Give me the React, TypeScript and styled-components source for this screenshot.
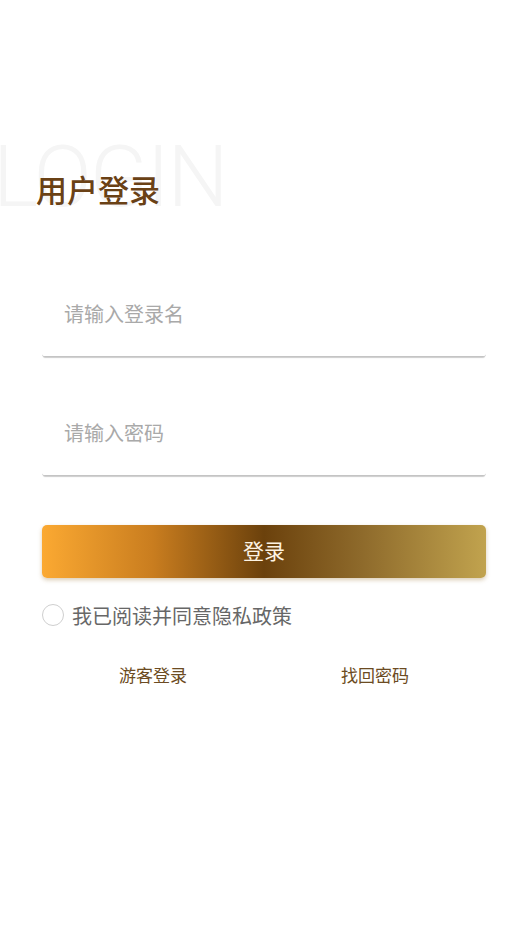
import React, { useState } from 'react'
import styled, { createGlobalStyle } from 'styled-components'

const GlobalStyle = createGlobalStyle`
  html, body {
    margin: 0;
    padding: 0;
    background: #ffffff;
  }
  body {
    font-family: "Noto Sans CJK SC", "Noto Sans", sans-serif;
  }
`

const Page = styled.div`
  width: 527px;
  min-height: 943px;
  background: #ffffff;
  overflow: hidden;
`

const Header = styled.div`
  position: relative;
  padding-top: 167px;
`

// faint backdrop word that sits behind the title
const Watermark = styled.div`
  position: absolute;
  left: -7px;
  top: 134px;
  font-family: Roboto, "Liberation Sans", sans-serif;
  font-weight: 300;
  font-size: 86px;
  line-height: 1;
  letter-spacing: -2px;
  color: #f5f5f5;
  user-select: none;
`

const Title = styled.h1`
  position: relative;
  margin: 0;
  padding-left: 36px;
  font-size: 31px;
  font-weight: 500;
  line-height: 44px;
  color: #6a4115;
`

const Form = styled.div`
  display: flex;
  flex-direction: column;
  padding: 65px 41px 0 42px;
`

const Field = styled.div<{ $gap?: number }>`
  height: 81px;
  box-sizing: border-box;
  margin-bottom: ${(p) => p.$gap ?? 0}px;
  padding-bottom: 6px;
  background: #ffffff;
  border-bottom: 1px solid #c4c4c4;
  border-radius: 0 0 3px 3px;
  box-shadow: 0 2px 1px -1px rgba(0, 0, 0, 0.2);
  display: flex;
  align-items: center;
`

const Input = styled.input`
  flex: 1;
  border: none;
  outline: none;
  background: transparent;
  padding: 0 0 0 22px;
  font-family: "Noto Sans CJK SC", sans-serif;
  font-size: 20px;
  color: #333;

  &::placeholder {
    color: #a9a9a9;
  }
`

const LoginButton = styled.button`
  height: 53px;
  border: none;
  border-radius: 5px;
  padding: 0 0 3px;
  background: linear-gradient(90deg, #fba932 0%, #c97d1f 25%, #6b410c 50%, #8e6a2b 72%, #c1a34e 100%);
  box-shadow: 0 2px 4px rgba(150, 110, 40, 0.35);
  color: #fdf3e3;
  font-family: "Noto Sans CJK SC", sans-serif;
  font-size: 21px;
  cursor: pointer;
`

const AgreeRow = styled.label`
  display: flex;
  align-items: center;
  height: 30px;
  margin-top: 22px;
  cursor: pointer;
`

const Radio = styled.span<{ $checked: boolean }>`
  width: 22px;
  height: 22px;
  border-radius: 50%;
  border: 1px solid #cfcfcf;
  box-sizing: border-box;
  margin-right: 8px;
  background: ${(p) => (p.$checked ? '#8a5a1c' : '#ffffff')};
`

const AgreeText = styled.span`
  font-size: 20px;
  color: #676767;
`

const Links = styled.div`
  display: flex;
  margin-top: 33px;
`

const LinkItem = styled.a`
  flex: 1;
  text-align: center;
  font-size: 17px;
  line-height: 24px;
  color: #6c4b22;
  text-decoration: none;
  cursor: pointer;
`

export default function App() {
  const [agreed, setAgreed] = useState(false)

  return (
    <>
      <GlobalStyle />
      <Page>
        <Header>
          <Watermark>LOGIN</Watermark>
          <Title>用户登录</Title>
        </Header>

        <Form>
          <Field $gap={38}>
            <Input placeholder="请输入登录名" />
          </Field>
          <Field $gap={49}>
            <Input type="password" placeholder="请输入密码" />
          </Field>

          <LoginButton>登录</LoginButton>

          <AgreeRow onClick={() => setAgreed(!agreed)}>
            <Radio $checked={agreed} />
            <AgreeText>我已阅读并同意隐私政策</AgreeText>
          </AgreeRow>

          <Links>
            <LinkItem>游客登录</LinkItem>
            <LinkItem>找回密码</LinkItem>
          </Links>
        </Form>
      </Page>
    </>
  )
}
